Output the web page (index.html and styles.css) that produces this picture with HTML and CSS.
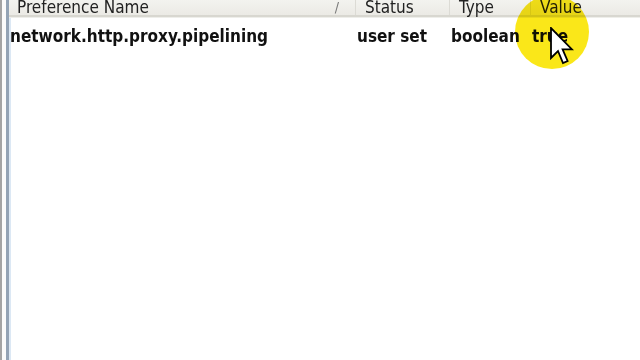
FILE: index.html
```html
<!DOCTYPE html>
<html lang="en">
<head>
    <meta charset="UTF-8">
    <title>about:config</title>
    <link rel="stylesheet" href="styles.css">
</head>
<body>

<div class="frame">
    <div class="tree">
        <div class="head">
            <div class="col col-name">Preference Name <span class="sort">/</span></div>
            <div class="col col-status">Status</div>
            <div class="col col-type">Type</div>
            <div class="col col-value">Value</div>
        </div>
        <div class="row">
            <div class="cell">network.http.proxy.pipelining</div>
            <div class="cell">user set</div>
            <div class="cell">boolean</div>
            <div class="cell">true</div>
        </div>
    </div>
</div>

<div class="highlight"></div>
<svg class="cursor" width="24" height="38" viewBox="0 0 12 19">
    <path d="M0.5 0.5 L0.5 15.5 L4 12 L6.5 18 L8.8 17 L6.3 11.2 L11 11.2 Z" fill="#fff" stroke="#000" stroke-width="0.9" stroke-linejoin="miter"/>
</svg>

</body>
</html>
```

FILE: styles.css
```css
body {
    margin: 0;
    background-color: #fff;
    font-family: "DejaVu Sans Condensed", "DejaVu Sans", sans-serif;
    overflow: hidden;
}
.frame {
    height: 360px;
    border-left: 2px solid #a4a4a4;
    padding-left: 4px;
    background-color: #fbfbfb;
}
.tree {
    height: 100%;
    border-left: 3px solid #93a3b5;
    box-shadow: inset 2px 0 0 #dce8f4;
    background-color: #fff;
}
.head {
    display: grid;
    grid-template-columns: 346px 94px 81px 1fr;
    height: 15px;
    background: linear-gradient(#f3f3ef, #ebeae5);
    border-bottom: 2px solid #d8d7d0;
    box-shadow: 0 1px 0 #eeeeea;
    font-size: 17px;
    color: #222;
}
.col {
    display: flex;
    align-items: flex-end;
    line-height: 10px;
    height: 12px;
    padding-left: 9px;
    border-left: 1px solid #dcdbd5;
    box-sizing: border-box;
}
.col-name {
    border-left: none;
    padding-left: 8px;
    justify-content: space-between;
    padding-right: 16px;
}
.sort {
    color: #777;
    font-size: 14px;
}
.col-status,
.col-type,
.col-value {
    height: 15px;
    padding-bottom: 3px;
}
.row {
    display: grid;
    grid-template-columns: 346px 94px 81px 1fr;
    margin-top: 9px;
    font-size: 17px;
    font-weight: bold;
    color: #111;
}
.cell {
    padding-left: 2px;
    line-height: 20px;
}
.cell:first-child {
    padding-left: 1px;
}
.highlight {
    position: absolute;
    left: 515px;
    top: -5px;
    width: 74px;
    height: 74px;
    border-radius: 50%;
    background-color: rgba(250, 228, 0, 0.9);
    mix-blend-mode: multiply;
}
.cursor {
    position: absolute;
    left: 550px;
    top: 27px;
}
```
